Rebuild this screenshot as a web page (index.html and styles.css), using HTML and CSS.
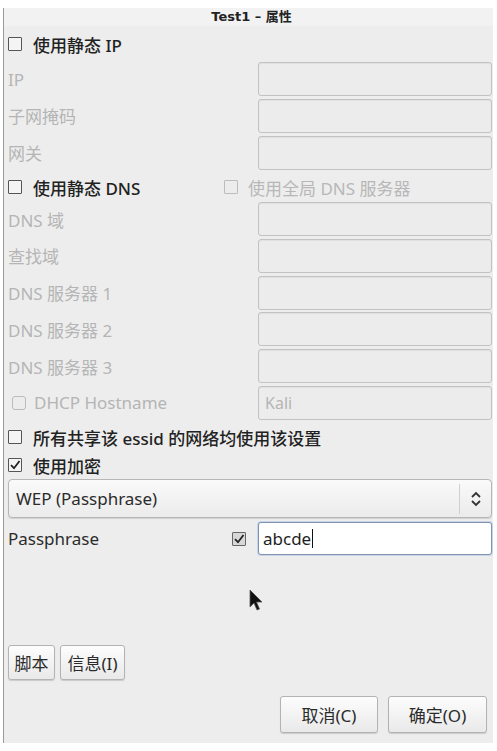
FILE: index.html
```html
<!DOCTYPE html>
<html lang="zh-CN">
<head>
<meta charset="utf-8">
<title>Test1 – 属性</title>
<link rel="stylesheet" href="styles.css">
</head>
<body>
<div class="dialog">
  <div class="titlebar">Test1 – 属性</div>
  <div class="content">
    <div class="check-row row-ip"><span class="cb"></span><span class="ctext">使用静态 IP</span></div>
    <div class="field"><span class="lbl">IP</span><span class="entry"></span></div>
    <div class="field"><span class="lbl">子网掩码</span><span class="entry"></span></div>
    <div class="field"><span class="lbl">网关</span><span class="entry"></span></div>
    <div class="check-row row-dns">
      <div class="dns-left"><span class="cb"></span><span class="ctext">使用静态 DNS</span></div>
      <div class="dns-right"><span class="cb cb-dis"></span><span class="ctext dis">使用全局 DNS 服务器</span></div>
    </div>
    <div class="field"><span class="lbl">DNS 域</span><span class="entry"></span></div>
    <div class="field"><span class="lbl">查找域</span><span class="entry"></span></div>
    <div class="field"><span class="lbl">DNS 服务器 1</span><span class="entry"></span></div>
    <div class="field"><span class="lbl">DNS 服务器 2</span><span class="entry"></span></div>
    <div class="field"><span class="lbl">DNS 服务器 3</span><span class="entry"></span></div>
    <div class="field">
      <span class="lbl lbl-dhcp"><span class="cb cb-dis cb-round"></span><span class="dhcp-text">DHCP Hostname</span></span>
      <span class="entry entry-text">Kali</span>
    </div>
    <div class="check-row row-essid"><span class="cb"></span><span class="ctext">所有共享该 essid 的网络均使用该设置</span></div>
    <div class="check-row row-enc">
      <span class="cb cb-checked"><svg viewBox="0 0 14 14" width="14" height="14"><path d="M3 7.2 L6 10.2 L11.5 3" fill="none" stroke="#222" stroke-width="1.8"/></svg></span>
      <span class="ctext">使用加密</span>
    </div>
    <div class="combo">
      <span class="combo-text">WEP (Passphrase)</span>
      <span class="combo-sep"></span>
      <svg class="combo-arrow" viewBox="0 0 12 20" width="12" height="20"><path d="M2 8 L6 4 L10 8 M2 12 L6 16 L10 12" fill="none" stroke="#333" stroke-width="1.8"/></svg>
    </div>
    <div class="pass-row">
      <span class="pass-lbl">Passphrase</span>
      <span class="cb cb-checked cb-grey"><svg viewBox="0 0 14 14" width="14" height="14"><path d="M3 7.2 L6 10.2 L11.5 3" fill="none" stroke="#222" stroke-width="1.8"/></svg></span>
      <span class="entry entry-focus">abcde<span class="caret"></span></span>
    </div>
    <div class="spacer"></div>
    <div class="btn-row-left">
      <span class="btn btn-script">脚本</span>
      <span class="btn btn-info">信息(I)</span>
    </div>
    <div class="btn-row-right">
      <span class="btn btn-main">取消(C)</span>
      <span class="btn btn-main btn-ok">确定(O)</span>
    </div>
  </div>
  <svg class="pointer" viewBox="0 0 14 24" width="14" height="24"><path d="M1 1 L1 18 L5 14 L8 21 L10.5 20 L7.5 13 L13 13 Z" fill="#111" stroke="#555" stroke-width="0.8"/></svg>
</div>
</body>
</html>
```
FILE: styles.css
```css
html, body {
  margin: 0;
  padding: 0;
  background: #ffffff;
}
body {
  font-family: "Noto Sans", "Noto Sans CJK SC", sans-serif;
  font-size: 17px;
  color: #2b2b2b;
}
.dialog {
  position: relative;
  margin: 8px 0 0 3px;
  width: 489px;
  height: 735px;
  border-left: 1px solid #9a9a9a;
  background: #ededed;
  display: flex;
  flex-direction: column;
}
.titlebar {
  height: 18px;
  background: #f2f2f2;
  font-family: "DejaVu Sans", "Noto Sans CJK SC", sans-serif;
  font-weight: bold;
  font-size: 13px;
  line-height: 18px;
  text-align: center;
  color: #222;
  text-indent: 6px;
}
.content {
  flex: 1;
  display: flex;
  flex-direction: column;
  padding: 0 1px 10px 4px;
}
.check-row {
  display: flex;
  align-items: center;
}
.row-ip { height: 36px; }
.row-dns { height: 29.75px; }
.row-essid { height: 29px; }
.row-enc { height: 27px; }
.cb {
  box-sizing: border-box;
  width: 14px;
  height: 14px;
  border: 1.5px solid #555;
  border-radius: 1px;
  background: #f4f4f4;
  margin-right: 11px;
  flex: none;
  display: flex;
  align-items: center;
  justify-content: center;
}
.cb svg { display: block; margin: -1.5px; }
.cb-dis {
  border-color: #bcbcbc;
  background: #ececec;
  margin-right: 10px;
}
.cb-round {
  border-radius: 3px;
  margin-left: 4px;
  margin-right: 8px;
}
.cb-grey {
  background: #d8d8d8;
  border-color: #666;
}
.ctext { color: #222; font-weight: 500; }
.ctext.dis, .dis { color: #b7b7b7; font-weight: 400; }
.dns-left {
  width: 216px;
  display: flex;
  align-items: center;
}
.dns-right {
  display: flex;
  align-items: center;
}
.field {
  display: flex;
  align-items: center;
  height: 34px;
  margin-bottom: 2.75px;
}
.lbl {
  width: 250px;
  color: #b5b5b5;
  display: flex;
  align-items: center;
}
.dhcp-text { color: #b5b5b5; }
.entry {
  box-sizing: border-box;
  width: 234px;
  height: 34px;
  border: 1px solid #c2c2c2;
  border-radius: 3px;
  background: #ececec;
  box-shadow: inset 0 1px 1px rgba(0,0,0,0.05);
  display: flex;
  align-items: center;
  padding-left: 6px;
}
.entry-text { color: #b5b5b5; font-size: 16px; }
.combo {
  box-sizing: border-box;
  margin-top: 0.5px;
  height: 39px;
  border: 1px solid #b6b6b6;
  border-radius: 4px;
  background: linear-gradient(#fafafa, #ebebeb);
  box-shadow: 0 1px 1px rgba(0,0,0,0.12);
  display: flex;
  align-items: center;
  padding-left: 7px;
}
.combo-text { flex: 1; color: #2b2b2b; }
.combo-sep {
  width: 1px;
  height: 30px;
  background: #cfcfcf;
  margin-right: 10px;
}
.combo-arrow { margin-right: 9px; }
.pass-row {
  margin-top: 4px;
  height: 33px;
  display: flex;
  align-items: center;
}
.pass-lbl {
  width: 224px;
  color: #2b2b2b;
}
.pass-row .cb { margin-right: 12px; }
.entry-focus {
  height: 33px;
  background: #ffffff;
  border: 1px solid #7f93b3;
  box-shadow: 0 0 0 1px #c9d4e6;
  color: #1e1e1e;
  padding-left: 4px;
}
.caret {
  display: inline-block;
  width: 1px;
  height: 19px;
  background: #111;
  margin-left: 1px;
}
.spacer { flex: 1; }
.btn {
  box-sizing: border-box;
  display: flex;
  align-items: center;
  justify-content: center;
  border: 1px solid #b3b3b3;
  border-radius: 3px;
  background: linear-gradient(#fdfdfd, #e9e9e9);
  box-shadow: 0 1px 1px rgba(0,0,0,0.15);
  color: #2b2b2b;
}
.btn-row-left {
  display: flex;
  gap: 5px;
  height: 35px;
}
.btn-script { width: 47px; }
.btn-info { width: 65px; }
.btn-row-right {
  display: flex;
  justify-content: flex-end;
  gap: 10px;
  height: 37px;
  margin-top: 16px;
  padding-right: 5px;
}
.btn-main { width: 98px; }
.btn-ok { width: 99px; }
.pointer {
  position: absolute;
  left: 245px;
  top: 581px;
}
```
